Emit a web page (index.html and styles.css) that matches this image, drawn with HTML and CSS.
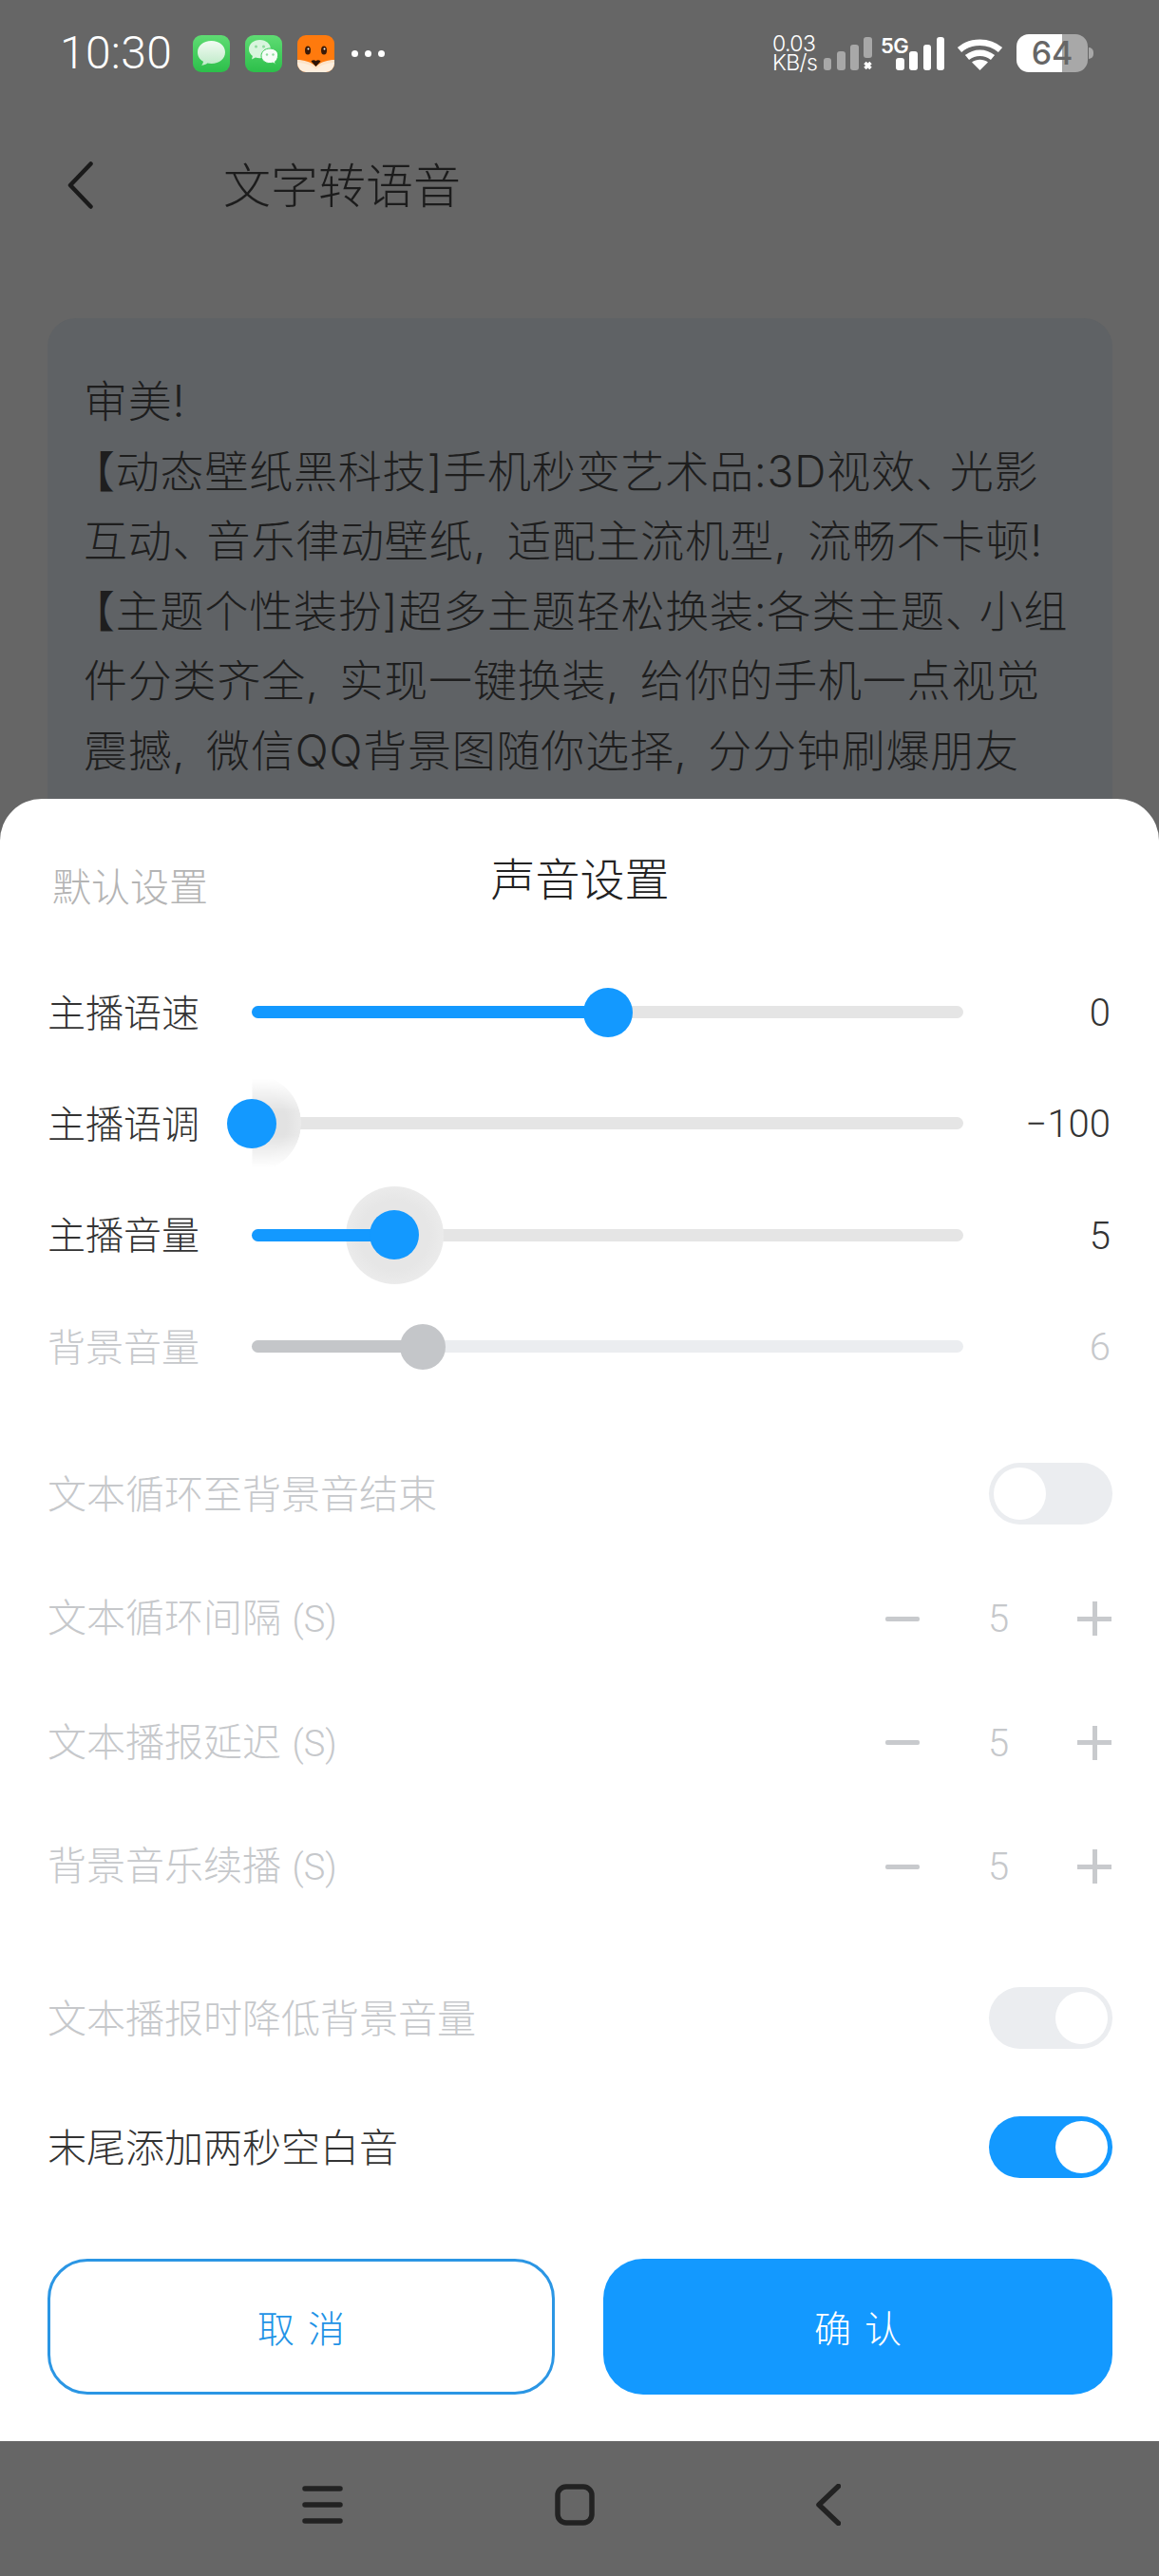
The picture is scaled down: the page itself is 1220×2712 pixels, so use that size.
FILE: index.html
```html
<!DOCTYPE html>
<html lang="zh-CN">
<head>
<meta charset="utf-8">
<title>文字转语音</title>
<link rel="stylesheet" href="styles.css">
</head>
<body>
<div class="screen">
  <div class="page">
    <header class="status">
      <span class="time">10:30</span>
      <div class="apps">
        <svg class="app" viewBox="0 0 39 39"><defs><linearGradient id="g1" x1="0" y1="0" x2="0" y2="1"><stop offset="0" stop-color="#5fdc73"/><stop offset="1" stop-color="#2cbf4a"/></linearGradient><linearGradient id="b1" x1="0" y1="0" x2="0" y2="1"><stop offset="0" stop-color="#f2fbf3"/><stop offset="1" stop-color="#bfeac8"/></linearGradient></defs><rect width="39" height="39" rx="9" fill="url(#g1)"/><path d="M19.500 6C10.900 6 5 11.300 5 18c0 4.200 2.300 7.700 6 9.800-.2 1.700-1 3-2 4 2.600-.2 4.700-1.100 6.300-2.400 1.300.3 2.700.5 4.200.5C28.100 29.900 34 24.700 34 18S28.100 6 19.500 6z" fill="url(#b1)"/></svg>
        <svg class="app" viewBox="0 0 39 39"><rect width="39" height="39" rx="9" fill="url(#g1)"/><path d="M15.500 5C8.800 5 4 9.300 4 14.800c0 3 1.500 5.500 3.900 7.300l-.9 3.400 3.900-2c1.400.4 2.900.7 4.500.7 6.700 0 11.500-4.300 11.500-9.600S22.200 5 15.500 5z" fill="#d9f5de"/><path d="M26 14c-5 0-9 3.400-9 7.800s4 7.800 9 7.800c1.100 0 2.200-.2 3.200-.5l3 1.600-.7-2.700c1.800-1.400 3-3.700 3-6.200C35.500 17.400 31 14 26 14z" fill="#f6fdf7" stroke="#3ecb5a" stroke-width="1"/><circle cx="11.500" cy="12" r="1.500" fill="#8fdc9e"/><circle cx="19.500" cy="12" r="1.500" fill="#8fdc9e"/><circle cx="23" cy="20.500" r="1.200" fill="#8fdc9e"/><circle cx="29.500" cy="20.500" r="1.200" fill="#8fdc9e"/></svg>
        <svg class="app" viewBox="0 0 39 39"><rect width="39" height="39" rx="9" fill="#ff7a0d"/><path d="M0 27c6 0 14 2.500 19.500 8C25 29.500 33 27 39 27v3a9 9 0 0 1-9 9H9a9 9 0 0 1-9-9z" fill="#fdeedd"/><path d="M0 26c7 0 14 2 19.500 7C25 28 32 26 39 26v3c-7 0-14 2-19.500 7C14 31 7 29 0 29z" fill="#fde3c8"/><ellipse cx="11" cy="16" rx="3" ry="4.500" fill="#3a1a08"/><ellipse cx="28" cy="16" rx="3" ry="4.500" fill="#3a1a08"/><circle cx="11.500" cy="14.500" r="1" fill="#fff"/><circle cx="28.500" cy="14.500" r="1" fill="#fff"/><path d="M14.500 27.500c1.500-1.500 3.500-1.500 5-.3 1.500-1.200 3.500-1.200 5 .3l-5 5.500z" fill="#2a1206"/></svg>
      </div>
      <div class="dots"><i></i><i></i><i></i></div>
      <div class="status-right">
        <div class="net"><span>0.03</span><span>KB/s</span></div>
        <svg class="sig sig-off" viewBox="0 0 51 35"><rect x="0" y="22" width="8" height="13" rx="3"/><rect x="14" y="15" width="9" height="20" rx="3"/><rect x="28" y="8" width="9" height="27" rx="3"/><rect x="42" y="0" width="9" height="22" rx="3"/><path class="cross" d="M43.500 27l6 6m0-6l-6 6"/></svg>
        <div class="sig5g"><span class="tag5g">5G</span>
          <svg class="sig sig-on" viewBox="0 0 51 35"><rect x="0" y="22" width="9" height="13" rx="3"/><rect x="14" y="15" width="9" height="20" rx="3"/><rect x="29" y="8" width="8" height="27" rx="3"/><rect x="43" y="0" width="8" height="35" rx="3"/></svg>
        </div>
        <svg class="wifi" viewBox="0 0 49 35"><path class="arc" d="M3 13.500C15 3 34 3 46 13.500"/><path class="arc" d="M11 21.500c8-6.500 19-6.500 27 0"/><path class="wedge" d="M24.500 35L16 26.500c5-3.600 12-3.600 17 0z"/></svg>
        <div class="battery"><span>64</span></div>
      </div>
    </header>

    <nav class="titlebar">
      <svg class="back" viewBox="0 0 27 50"><path d="M24.500 2.500L3 25l21.500 22.500"/></svg>
      <h1 class="page-title">文字转语音</h1>
    </nav>

    <section class="card">
      <p class="card-text">审美!<br><span class="lb">【</span>动态壁纸黑科技]手机秒变艺术品:3D视效<span class="dun">、</span>光影<br>互动<span class="dun">、</span>音乐律动壁纸, 适配主流机型, 流畅不卡顿!<br><span class="lb">【</span>主题个性装扮]超多主题轻松换装:各类主题<span class="dun">、</span>小组<br>件分类齐全, 实现一键换装, 给你的手机一点视觉<br>震撼, 微信QQ背景图随你选择, 分分钟刷爆朋友<br>圈!</p>
    </section>

    <section class="sheet">
      <div class="sheet-head">
        <span class="reset">默认设置</span>
        <h2 class="sheet-title">声音设置</h2>
      </div>

      <div class="slider-row">
        <span class="label">主播语速</span>
        <div class="track"><div class="fill" style="width:50%"><i class="thumb"></i></div></div>
        <span class="value">0</span>
      </div>
      <div class="slider-row">
        <span class="label">主播语调</span>
        <div class="track"><div class="fill" style="width:0%"><i class="halo halo-edge"></i><i class="thumb"></i></div></div>
        <span class="value">−100</span>
      </div>
      <div class="slider-row">
        <span class="label">主播音量</span>
        <div class="track"><div class="fill" style="width:20%"><i class="halo"></i><i class="thumb"></i></div></div>
        <span class="value">5</span>
      </div>
      <div class="slider-row off">
        <span class="label">背景音量</span>
        <div class="track"><div class="fill" style="width:24%"><i class="thumb"></i></div></div>
        <span class="value">6</span>
      </div>

      <div class="switch-row first off">
        <span class="label">文本循环至背景音结束</span>
        <span class="switch"></span>
      </div>
      <div class="step-row off">
        <span class="label">文本循环间隔 <span class="unit">(S)</span></span>
        <div class="stepper"><i class="minus"></i><span class="num">5</span><i class="plus"></i></div>
      </div>
      <div class="step-row off">
        <span class="label">文本播报延迟 <span class="unit">(S)</span></span>
        <div class="stepper"><i class="minus"></i><span class="num">5</span><i class="plus"></i></div>
      </div>
      <div class="step-row off">
        <span class="label">背景音乐续播 <span class="unit">(S)</span></span>
        <div class="stepper"><i class="minus"></i><span class="num">5</span><i class="plus"></i></div>
      </div>
      <div class="switch-row gap off">
        <span class="label">文本播报时降低背景音量</span>
        <span class="switch right"></span>
      </div>
      <div class="switch-row">
        <span class="label">末尾添加两秒空白音</span>
        <span class="switch right on"></span>
      </div>

      <div class="actions">
        <button class="btn btn-ghost">取消</button>
        <button class="btn btn-solid">确认</button>
      </div>
    </section>
  </div>

  <footer class="sysnav">
    <svg class="nav-menu" viewBox="0 0 43 40"><path d="M3 3h37M3 20h37M3 37h37"/></svg>
    <svg class="nav-home" viewBox="0 0 42 44"><rect x="3" y="3" width="36" height="38" rx="9"/></svg>
    <svg class="nav-back" viewBox="0 0 27 44"><path d="M24.500 2.500L4 22l20.500 19.500"/></svg>
  </footer>
</div>
</body>
</html>
```
FILE: styles.css
```css
* { box-sizing: border-box; }
html, body { margin: 0; padding: 0; }
body {
  width: 1220px;
  height: 2712px;
  overflow: hidden;
  background: #666666;
  font-family: "Inter", "Noto Sans CJK SC", sans-serif;
  font-weight: 300;
}
i { display: block; font-style: normal; }

.screen { width: 1220px; height: 2712px; display: flex; flex-direction: column; }
.page { position: relative; height: 2570px; overflow: hidden; flex: none; }

/* status bar */
.status { height: 112px; display: flex; align-items: center; padding: 0 75px 0 63px; color: #fff; }
.time { font-family: "Roboto", sans-serif; font-weight: 300; font-size: 48px; line-height: 1; width: 140px; letter-spacing: .3px; }
.apps { display: flex; gap: 16px; }
.app { width: 39px; height: 39px; display: block; }
.dots { display: flex; gap: 7px; margin-left: 18px; }
.dots i { width: 7px; height: 7px; border-radius: 50%; background: #fff; }
.status-right { margin-left: auto; display: flex; align-items: center; }
.net { display: flex; flex-direction: column; font-family: "Inter", sans-serif; font-weight: 300; font-size: 23px; line-height: 20px; width: 54px; letter-spacing: -.6px; }
.sig { width: 51px; height: 35px; display: block; }
.sig-off rect { fill: #a8a8a8; }
.sig-off .cross { stroke: #fff; stroke-width: 3.500px; fill: none; }
.sig-on rect { fill: #fff; }
.sig5g { position: relative; margin-left: 25px; }
.tag5g { position: absolute; left: -16px; top: 1px; font-family: "Inter", sans-serif; font-size: 22px; line-height: 16px; font-weight: 600; color: #fff; letter-spacing: -.5px; }
.wifi { width: 49px; height: 35px; margin-left: 13px; display: block; }
.wifi .arc { fill: none; stroke: #fff; stroke-width: 6.500px; }
.wifi .wedge { fill: #fff; }
.battery {
  position: relative;
  width: 75px; height: 40px; margin-left: 14px;
  border-radius: 13px;
  background: linear-gradient(to right, #fff 64%, #a8a8a8 64%);
  color: #666;
  display: flex; align-items: center; justify-content: center;
  font-family: "Inter", sans-serif; font-weight: 500; font-size: 34px; line-height: 1;
}
.battery::after {
  content: ""; position: absolute; right: -6px; top: 14px;
  width: 5px; height: 12px; border-radius: 0 6px 6px 0; background: #a8a8a8;
}

/* title bar */
.titlebar { height: 170px; display: flex; align-items: flex-start; padding: 58px 0 0 71px; }
.back { width: 27px; height: 50px; display: block; flex: none; }
.back path { fill: none; stroke: #1a1a1a; stroke-width: 4.500px; stroke-linecap: round; stroke-linejoin: round; }
.page-title { margin: -2px 0 0 137px; font-size: 50px; line-height: 56px; font-weight: 300; color: #1c1c1c; }

/* backdrop card */
.card { margin: 53px 49px 0 50px; height: 1000px; background: #5f6265; border-radius: 30px; padding: 51px 20px 0 38px; }
.card-text { margin: 0; font-size: 46px; line-height: 73.500px; color: #1e1e1e; font-weight: 300; letter-spacing: .8px; word-spacing: 8px; white-space: nowrap; }
.lb { margin-left: -13px; }
.dun { letter-spacing: -10px; }

/* sheet */
.sheet { position: absolute; left: 0; right: 0; top: 841px; height: 1729px; background: #fff; border-radius: 44px 44px 0 0; padding: 0 49px 0 50px; color: #333; }
.sheet-head { height: 166px; display: grid; grid-template-columns: 1fr auto 1fr; align-items: start; padding-top: 56px; margin-left: 5px; margin-right: 5px; }
.reset { font-size: 41px; line-height: 58px; margin-top: 8px; color: #b4b4b4; }
.sheet-title { margin: 0; font-size: 47px; line-height: 58px; font-weight: 300; color: #222; }

.label { font-size: 41px; line-height: 56px; white-space: nowrap; }
.unit { font-size: 38px; font-family: "Roboto", sans-serif; font-weight: 300; }
.value { font-size: 40px; line-height: 56px; text-align: right; padding: 3px 2px 0 0; font-family: "Roboto", sans-serif; font-weight: 300; }

.slider-row { height: 117.300px; display: grid; grid-template-columns: 215px 749px 1fr; align-items: center; }
.slider-row .label { font-size: 40px; padding-top: 2px; }
.track { position: relative; isolation: isolate; height: 13px; border-radius: 7px; background: #e5e5e5; }
.fill { position: relative; height: 13px; border-radius: 7px; background: #1399ff; }
.thumb { position: absolute; right: -26px; top: -19.500px; width: 52px; height: 52px; border-radius: 50%; background: #1399ff; }
.halo { position: absolute; z-index: -1; right: -52px; top: -45px; width: 103px; height: 103px; border-radius: 50%; background: radial-gradient(circle, #e6e6e6 50%, #f2f2f2 100%); }
.halo-edge {
  background: radial-gradient(circle, #e2e2e2 50%, #f6f6f6 100%);
  clip-path: inset(0 0 0 50%);
  -webkit-mask-image: linear-gradient(to bottom, transparent 4%, #000 38%, #000 62%, transparent 96%);
  mask-image: linear-gradient(to bottom, transparent 4%, #000 38%, #000 62%, transparent 96%);
}
.off .label, .off .value, .off .num { color: #c6c8cb; }
.off .track { background: #ebedf0; }
.off .fill { background: #c4c6c9; }
.off .thumb { background: #c4c6c9; right: -24px; top: -17.500px; width: 48px; height: 48px; }

.switch-row, .step-row { display: flex; align-items: center; justify-content: space-between; }
.switch-row { height: 136px; }
.switch-row.first { height: 132px; margin-top: 31px; }
.switch-row.first .switch { margin-bottom: 2px; }
.switch-row.gap { margin-top: 26px; }
.step-row { height: 130.500px; }
.switch { position: relative; display: block; width: 130px; height: 65px; border-radius: 33px; background: #ebedf0; }
.switch::after { content: ""; position: absolute; left: 5px; top: 5px; width: 55px; height: 55px; border-radius: 50%; background: #fff; }
.switch.right::after { left: 70px; }
.switch.on { background: #1399ff; }

.stepper { display: grid; grid-template-columns: 36px 1fr 36px; align-items: center; width: 238px; margin-right: 1px; }
.stepper .num { text-align: center; font-size: 40px; line-height: 56px; padding-top: 2px; font-family: "Roboto", sans-serif; font-weight: 300; }
.minus { height: 5px; border-radius: 2px; background: #c8cacd; }
.plus { position: relative; height: 36px; background: linear-gradient(#c8cacd, #c8cacd) center / 100% 5px no-repeat, linear-gradient(#c8cacd, #c8cacd) center / 5px 100% no-repeat; }

.actions { display: grid; grid-template-columns: 534px 536px; column-gap: 51px; margin-top: 49px; }
.btn { height: 143px; border-radius: 42px; font-family: inherit; font-size: 39px; font-weight: 300; letter-spacing: 14px; text-indent: 14px; }
.btn-ghost { background: #fff; color: #1f93e6; border: 3px solid #2b96e4; }
.btn-solid { background: #1399ff; color: #fff; border: 0; }

/* system navigation */
.sysnav { height: 142px; display: flex; align-items: center; padding: 0 0 8px 318px; }
.sysnav svg { display: block; flex: none; fill: none; stroke: #222; stroke-width: 5.500px; stroke-linecap: round; stroke-linejoin: round; }
.nav-menu { width: 43px; height: 40px; }
.nav-home { width: 42px; height: 44px; margin-left: 223px; }
.nav-back { width: 27px; height: 44px; margin-left: 232px; }
```
